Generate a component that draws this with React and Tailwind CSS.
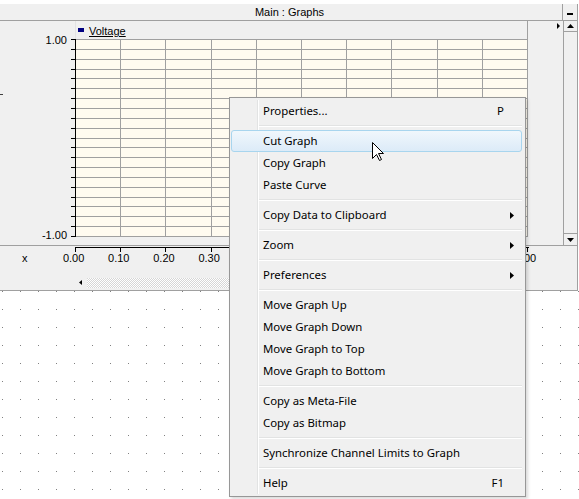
import React from "react";

const menuItems = [
  { label: "Properties...", key: "P" },
  "sep",
  { label: "Cut Graph", active: true },
  { label: "Copy Graph" },
  { label: "Paste Curve" },
  "sep",
  { label: "Copy Data to Clipboard", sub: true },
  "sep",
  { label: "Zoom", sub: true },
  "sep",
  { label: "Preferences", sub: true },
  "sep",
  { label: "Move Graph Up" },
  { label: "Move Graph Down" },
  { label: "Move Graph to Top" },
  { label: "Move Graph to Bottom" },
  "sep",
  { label: "Copy as Meta-File" },
  { label: "Copy as Bitmap" },
  "sep",
  { label: "Synchronize Channel Limits to Graph" },
  "sep",
  { label: "Help", key: "F1" },
];

const xLabels = ["0.00", "0.10", "0.20", "0.30", "0.40", "0.50", "0.60", "0.70", "0.80", "0.90", "1.00"];

const vx = Array.from({ length: 11 }, (_, i) => Math.round(i * 45.2));
const hy = Array.from({ length: 21 }, (_, j) => Math.round(j * 9.85));

const Plot = () => (
  <svg width="458" height="198" className="block shrink-0">
    <rect x="5" y="0" width="453" height="198" fill="#fffbf0" />
    {hy.map((y) => (
      <line key={"h" + y} x1="5" x2="458" y1={y + 0.5} y2={y + 0.5} stroke="#a0a0a0" />
    ))}
    {vx.map((x) => (
      <line key={"v" + x} x1={x + 5.5} x2={x + 5.5} y1="0" y2="198" stroke="#a0a0a0" />
    ))}
    <line x1="5.5" x2="5.5" y1="0" y2="198" stroke="#000" />
    {hy.map((y) => (
      <line key={"t" + y} x1="1" x2="5" y1={y + 0.5} y2={y + 0.5} stroke="#000" />
    ))}
  </svg>
);

const XAxis = () => (
  <svg width="454" height="5" className="block">
    <line x1="0" x2="454" y1="0.5" y2="0.5" stroke="#000" />
    {vx.map((x) => (
      <line key={x} x1={x + 0.5} x2={x + 0.5} y1="0" y2="5" stroke="#000" />
    ))}
  </svg>
);

const Arrow = () => (
  <svg width="4" height="7" viewBox="0 0 4 7" className="block">
    <path d="M0 0 L4 3.5 L0 7 Z" fill="#000" />
  </svg>
);

const ContextMenu = () => (
  <div className="absolute left-[229px] top-[97px] w-[297px] border border-[#979797] bg-[#f0f0f0] pt-[2px] pb-[2px] px-[1px] font-['Noto_Sans',sans-serif] text-[11.4px] text-black shadow-[2px_2px_3px_rgba(0,0,0,0.15)]">
    <div className="absolute left-[27px] top-[2px] bottom-[2px] w-[2px] border-l border-[#e2e3e3] border-r border-r-white" />
    {menuItems.map((it, i) =>
      it === "sep" ? (
        <div key={i} className="h-[8px] flex items-center ml-[28px] mr-[2px]">
          <div className="w-full h-[2px] border-t border-[#e2e3e3] border-b border-b-white" />
        </div>
      ) : (
        <div
          key={i}
          className={
            "relative h-[22px] mr-[2px] flex items-center rounded-[3px] border pl-[31px] " +
            (it.active
              ? "border-[#a8d5ee] bg-gradient-to-b from-[#f0f7fc] to-[#dcebf8]"
              : "border-transparent")
          }
        >
          <span className="flex-1 leading-none">{it.label}</span>
          {it.key && <span className="mr-[17px] leading-none">{it.key}</span>}
          {it.sub && (
            <span className="mr-[7px]">
              <Arrow />
            </span>
          )}
        </div>
      )
    )}
  </div>
);

const Cursor = () => (
  <svg width="13" height="20" viewBox="0 0 13 20" className="absolute left-[371px] top-[142px]">
    <path d="M1.5 0.5 L1.5 16.5 L5.5 12.5 L8.5 18.5 L10.5 17.5 L7.5 11.5 L12.5 11.5 Z" fill="#fff" stroke="#000" strokeLinejoin="miter" />
  </svg>
);

export default function App() {
  return (
    <div className="relative w-[579px] h-[499px] bg-white overflow-hidden font-['Liberation_Sans',Arial,sans-serif] text-[11px] leading-[13px] text-black">
      {/* title bar */}
      <div className="mt-[4px] w-[578px] h-[17px] bg-[#f0f0f0] border-b border-[#a0a0a0] flex">
        <div className="flex-1 pl-[17px] flex items-center justify-center">Main : Graphs</div>
        <div className="w-[16px] h-full border-x border-[#a0a0a0] flex items-center justify-center">
          <div className="w-[6px] h-[2px] bg-black mt-[3px]" />
        </div>
      </div>

      {/* graph panel */}
      <div className="w-[578px] h-[270px] bg-[#f0f0f0] border-r border-b border-[#a0a0a0] flex flex-col">
        <div className="h-[224px] flex">
          <div className="w-[563px] flex flex-col">
            <div className="h-[18px] flex">
              <div className="w-[75px]" />
              <div className="w-[453px] h-full border-l border-[#e3e3e3] border-r border-r-[#a0a0a0] flex items-start pl-[2px] pt-[4px]">
                <div className="mt-[3px] w-[6px] h-[4px] bg-[#000080]" />
                <span className="ml-[5px] underline underline-offset-[1px]">Voltage</span>
              </div>
              <div className="pl-[29px] pt-[2px]">
                <svg width="3" height="6" viewBox="0 0 3 6" className="block">
                  <path d="M0 0 L3 3 L0 6 Z" fill="#000" />
                </svg>
              </div>
            </div>
            <div className="flex">
              <div className="relative w-[70px] h-[198px] flex flex-col justify-between items-end pr-[3px]">
                <span className="-mt-[5px]">1.00</span>
                <span className="-mb-[5px]">-1.00</span>
                <div className="absolute left-0 top-[55px] w-[3px] h-[1px] bg-[#404040]" />
              </div>
              <Plot />
            </div>
          </div>
          <div className="w-[14px] border-l border-[#a0a0a0] flex flex-col justify-between">
            <div className="h-[11px] border-b border-[#a0a0a0] flex items-center justify-center">
              <svg width="7" height="4" viewBox="0 0 7 4" className="block">
                <path d="M0 4 L3.5 0 L7 4 Z" fill="#000" />
              </svg>
            </div>
            <div className="h-[12px] border-t border-[#a0a0a0] flex items-center justify-center">
              <svg width="7" height="4" viewBox="0 0 7 4" className="block">
                <path d="M0 0 L3.5 4 L7 0 Z" fill="#000" />
              </svg>
            </div>
          </div>
        </div>

        <div className="h-[45px] border-t border-[#a0a0a0] flex flex-col">
          <div className="mt-[1px] flex">
            <div className="w-[75px]" />
            <XAxis />
          </div>
          <div className="h-[13px] flex">
            <div className="w-[51px] pl-[22px]">x</div>
            {xLabels.map((l) => (
              <div key={l} className="w-[45.2px] shrink-0 text-center">
                {l}
              </div>
            ))}
          </div>
          <div className="mt-[13px] ml-[75px] w-[451px] h-[10px] flex">
            <div className="w-[12px] pt-[2px] pl-[4px]">
              <svg width="3" height="5" viewBox="0 0 3 5" className="block">
                <path d="M3 0 L0 2.5 L3 5 Z" fill="#000" />
              </svg>
            </div>
            <svg width="439" height="10" className="block shrink-0">
              <defs>
                <pattern id="hatch" width="2" height="2" patternUnits="userSpaceOnUse">
                  <rect width="2" height="2" fill="#ffffff" />
                  <rect width="1" height="1" fill="#d6d6d6" />
                  <rect x="1" y="1" width="1" height="1" fill="#d6d6d6" />
                </pattern>
              </defs>
              <rect width="439" height="10" fill="url(#hatch)" />
            </svg>
          </div>
        </div>
      </div>

      {/* dotted canvas */}
      <svg width="579" height="208" className="block">
        <defs>
          <pattern id="dots" width="18" height="18" patternUnits="userSpaceOnUse">
            <rect x="2" y="0" width="1" height="1" fill="#808080" />
          </pattern>
        </defs>
        <rect width="579" height="208" fill="url(#dots)" />
      </svg>

      <ContextMenu />
      <Cursor />
    </div>
  );
}
